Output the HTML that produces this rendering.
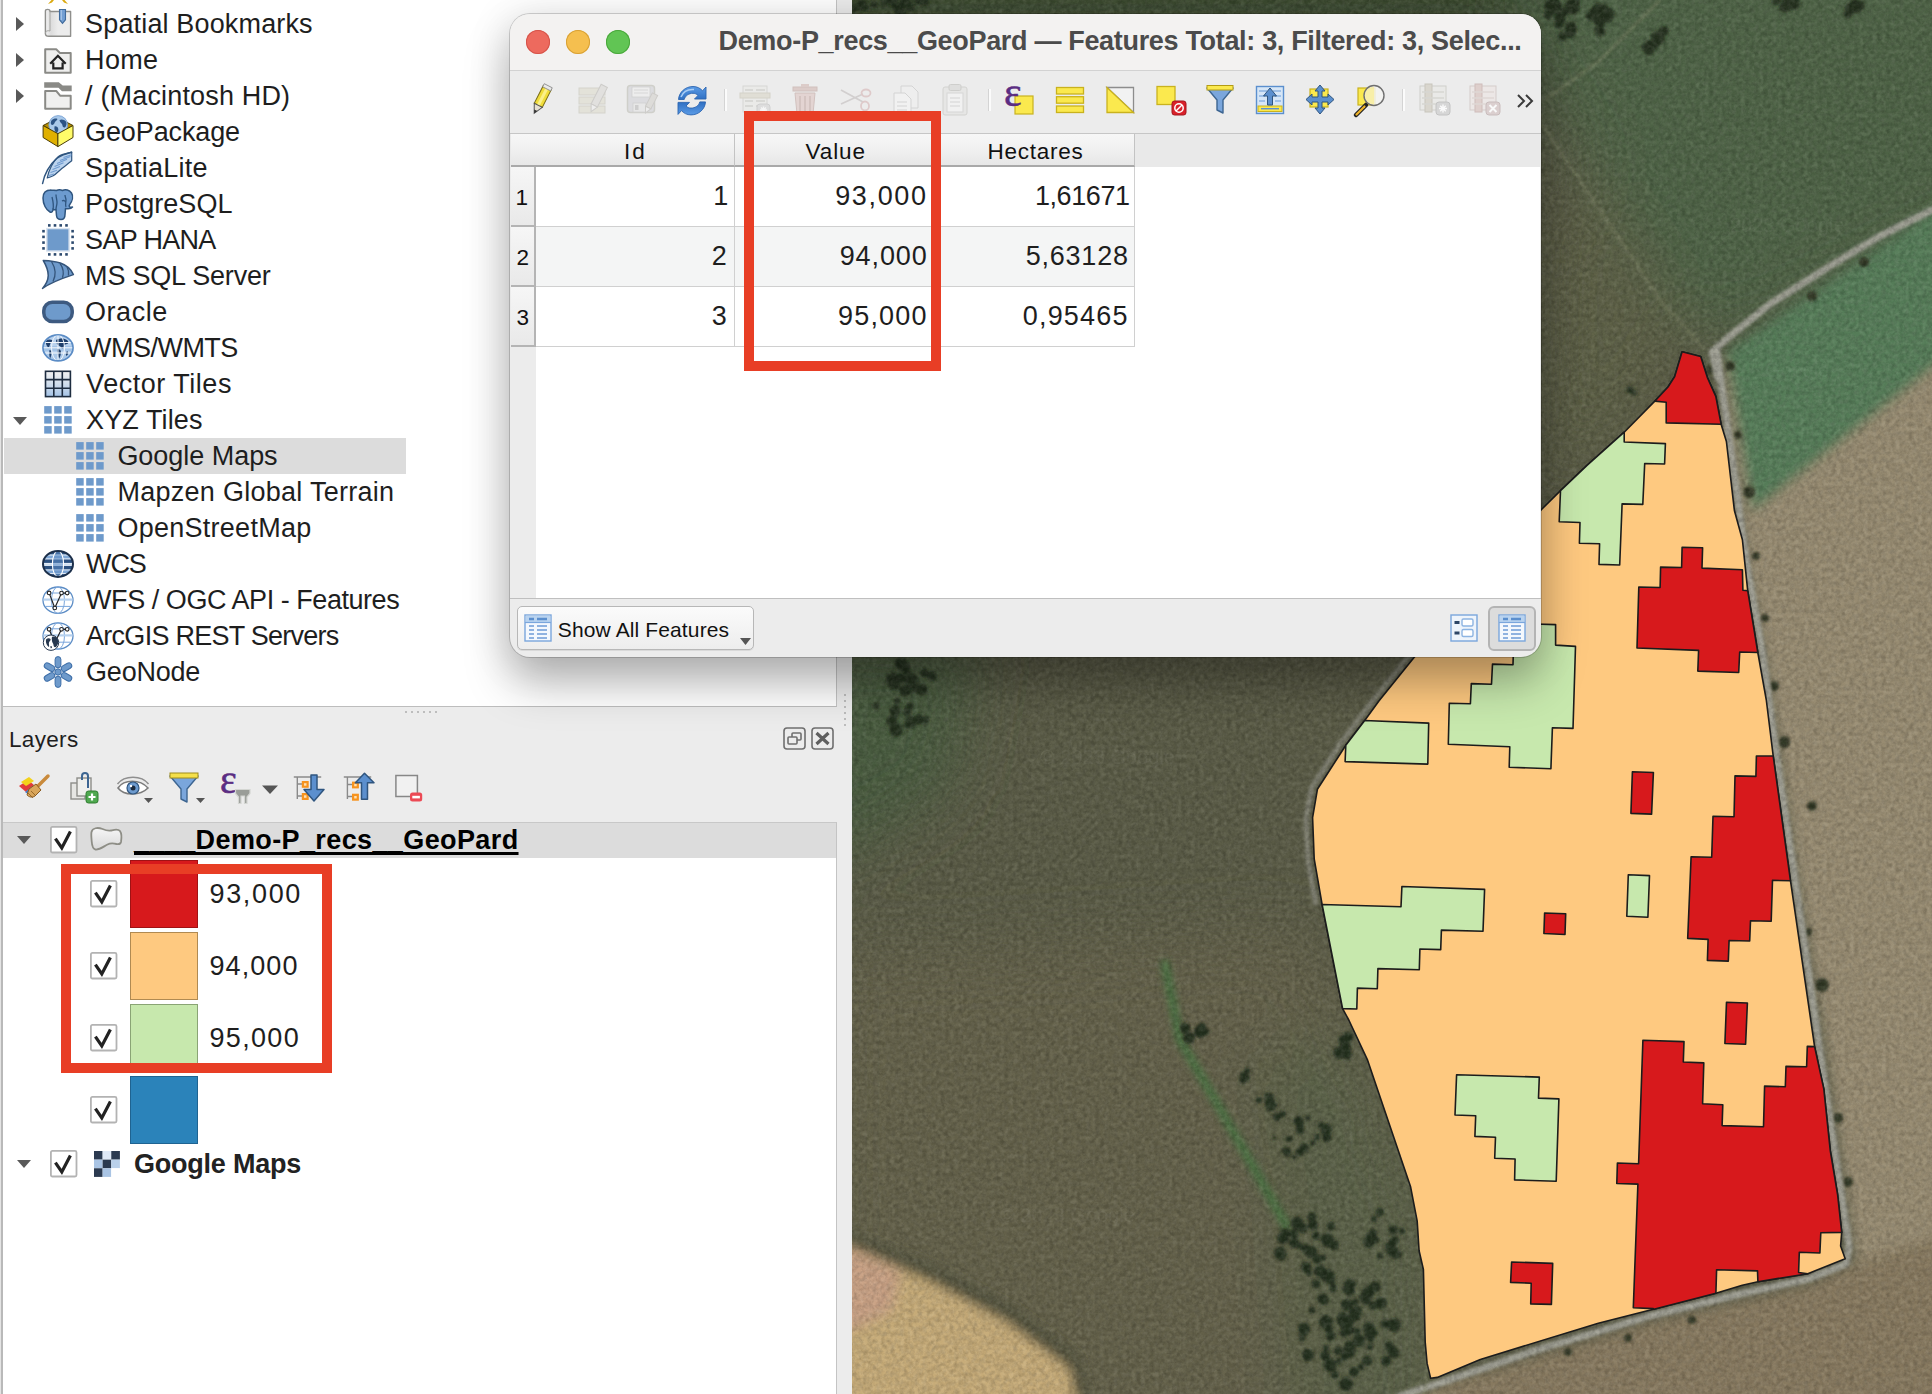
<!DOCTYPE html>
<html><head><meta charset="utf-8"><title>QGIS</title>
<style>
html,body{margin:0;padding:0}
body{width:1932px;height:1394px;overflow:hidden;position:relative;background:#ececec;font-family:"Liberation Sans",sans-serif;color:#1e1e1e}
.abs{position:absolute}
.t{white-space:pre}
svg{display:block;overflow:visible}
</style></head><body>
<svg id="map" width="1080" height="1394" viewBox="852 0 1080 1394" style="position:absolute;left:852px;top:0;overflow:hidden">
<defs>
<filter id="b6" filterUnits="userSpaceOnUse" x="700" y="-100" width="1400" height="1700"><feGaussianBlur stdDeviation="6"/></filter>
<filter id="b14" filterUnits="userSpaceOnUse" x="700" y="-100" width="1400" height="1700"><feGaussianBlur stdDeviation="14"/></filter>
<filter id="b2" filterUnits="userSpaceOnUse" x="700" y="-100" width="1400" height="1700"><feGaussianBlur stdDeviation="1.800"/></filter>
<filter id="b3" filterUnits="userSpaceOnUse" x="700" y="-100" width="1400" height="1700"><feGaussianBlur stdDeviation="3"/></filter>
<filter id="b30" filterUnits="userSpaceOnUse" x="700" y="-100" width="1400" height="1700"><feGaussianBlur stdDeviation="30"/></filter>
<filter id="noise" filterUnits="userSpaceOnUse" x="852" y="0" width="1080" height="1394"><feTurbulence type="fractalNoise" baseFrequency="0.22" numOctaves="3" seed="4" result="n"/><feColorMatrix in="n" type="matrix" values="0 0 0 0 0  0 0 0 0 0  0 0 0 0 0  1.4 1.4 0 0 -1.02"/></filter>
<filter id="noise2" filterUnits="userSpaceOnUse" x="852" y="0" width="1080" height="1394"><feTurbulence type="fractalNoise" baseFrequency="0.22" numOctaves="3" seed="11" result="n"/><feColorMatrix in="n" type="matrix" values="0 0 0 0 1  0 0 0 0 1  0 0 0 0 .9  1.4 1.4 0 0 -1.05"/></filter>
</defs>
<rect x="852" y="0" width="1080" height="1394" fill="#595a45"/>
<!-- large soft colour regions -->
<g filter="url(#b30)">
  <polygon points="1500,-80 2010,-80 2010,210 1740,345 1690,325 1590,170 1520,60" fill="#4d6244"/>
  <polygon points="1590,170 1690,325 1650,400 1545,500 1545,250" fill="#5b5e45"/>
  <polygon points="800,-80 1520,-80 1520,34 800,34" fill="#39482f"/>
  <polygon points="800,640 980,640 950,790 800,880" fill="#465a3c"/>
  <polygon points="820,960 1300,930 1400,1100 1440,1460 820,1460" fill="#64614a"/>
  <polygon points="1250,1060 1340,1030 1440,1220 1440,1460 1290,1460 1270,1200" fill="#5a6047"/>
</g>
<g filter="url(#b6)">
  <!-- right tan field -->
  <polygon points="1722,360 1990,175 1990,1460 1290,1460 1440,1385 1650,1322 1812,1284 1856,1262 1826,1050 1798,880 1764,650 1748,570 1726,410" fill="#978b71"/>
  <!-- green crop field top right -->
  <polygon points="1726,352 1990,172 1990,322 1752,512 1740,440" fill="#557c59"/>
  <!-- bottom brown -->
  <polygon points="1856,1262 1990,1222 1990,1460 1290,1460 1440,1385 1650,1322 1812,1284" fill="#87795f"/>
</g>
<g filter="url(#b6)">
  <!-- dark rim then yellow field bottom-left -->
  <polygon points="800,1225 856,1236 934,1268 1014,1310 1078,1358 1102,1460 800,1460" fill="#4a4b37"/>
  <polygon points="800,1240 852,1247 930,1281 1007,1322 1069,1368 1090,1460 800,1460" fill="#c6ab78"/>
  <polygon points="800,1247 852,1250 900,1272 892,1310 852,1330 800,1330" fill="#c9a184"/>
</g>
<!-- hedge strip -->
<g filter="url(#b3)">
  <polyline points="1165,964 1180,1040 1215,1100 1255,1170 1287,1227" fill="none" stroke="#4a6e40" stroke-width="9" stroke-linecap="round"/>
</g>
<g filter="url(#b2)" fill="#232e1c"><circle cx="895" cy="711" r="5.6"/><circle cx="918" cy="720" r="4.5"/><circle cx="919" cy="717" r="3.1"/><circle cx="897" cy="701" r="3.4"/><circle cx="876" cy="706" r="3.5"/><circle cx="896" cy="730" r="6.8"/><circle cx="894" cy="683" r="6.9"/><circle cx="925" cy="720" r="4.2"/><circle cx="907" cy="712" r="4.2"/><circle cx="916" cy="688" r="5.3"/><circle cx="901" cy="678" r="5.2"/><circle cx="910" cy="706" r="3.8"/><circle cx="907" cy="675" r="4.3"/><circle cx="894" cy="681" r="4.2"/><circle cx="924" cy="673" r="4.0"/><circle cx="892" cy="680" r="6.5"/><circle cx="911" cy="680" r="6.9"/><circle cx="911" cy="722" r="6.0"/><circle cx="907" cy="726" r="3.2"/><circle cx="905" cy="667" r="5.3"/><circle cx="922" cy="690" r="5.8"/><circle cx="894" cy="677" r="4.8"/><circle cx="932" cy="676" r="4.9"/><circle cx="905" cy="691" r="5.8"/><circle cx="901" cy="664" r="6.3"/><circle cx="892" cy="721" r="5.7"/><circle cx="1206" cy="1032" r="3.5"/><circle cx="1199" cy="1032" r="5.3"/><circle cx="1201" cy="1034" r="4.2"/><circle cx="1200" cy="1029" r="4.3"/><circle cx="1185" cy="1028" r="5.5"/><circle cx="1202" cy="1027" r="4.2"/><circle cx="1189" cy="1038" r="5.9"/><circle cx="1200" cy="1034" r="3.7"/><circle cx="1347" cy="1055" r="4.8"/><circle cx="1346" cy="1048" r="4.3"/><circle cx="1339" cy="1053" r="5.9"/><circle cx="1343" cy="1040" r="4.9"/><circle cx="1345" cy="1045" r="5.7"/><circle cx="1348" cy="1037" r="5.4"/><circle cx="1340" cy="1051" r="3.3"/><circle cx="1344" cy="1045" r="3.2"/><circle cx="1347" cy="1051" r="4.0"/><circle cx="1243" cy="1075" r="3.3"/><circle cx="1247" cy="1078" r="3.1"/><circle cx="1247" cy="1071" r="3.3"/><circle cx="1243" cy="1080" r="3.7"/><circle cx="1271" cy="1105" r="6.0"/><circle cx="1259" cy="1100" r="3.3"/><circle cx="1269" cy="1102" r="3.8"/><circle cx="1267" cy="1096" r="3.1"/><circle cx="1271" cy="1097" r="3.4"/><circle cx="1289" cy="1139" r="3.6"/><circle cx="1327" cy="1136" r="4.1"/><circle cx="1294" cy="1157" r="2.5"/><circle cx="1299" cy="1120" r="4.3"/><circle cx="1287" cy="1152" r="4.4"/><circle cx="1327" cy="1138" r="4.4"/><circle cx="1308" cy="1118" r="2.7"/><circle cx="1274" cy="1138" r="2.1"/><circle cx="1313" cy="1143" r="2.8"/><circle cx="1283" cy="1114" r="3.3"/><circle cx="1327" cy="1129" r="4.9"/><circle cx="1284" cy="1150" r="2.7"/><circle cx="1300" cy="1152" r="3.9"/><circle cx="1321" cy="1125" r="3.4"/><circle cx="1277" cy="1119" r="2.3"/><circle cx="1277" cy="1117" r="4.3"/><circle cx="1295" cy="1121" r="2.5"/><circle cx="1300" cy="1124" r="4.4"/><circle cx="1317" cy="1137" r="3.2"/><circle cx="1323" cy="1132" r="2.5"/><circle cx="1304" cy="1148" r="4.7"/><circle cx="1300" cy="1130" r="4.5"/><circle cx="1334" cy="1246" r="4.4"/><circle cx="1300" cy="1246" r="3.1"/><circle cx="1334" cy="1245" r="5.1"/><circle cx="1328" cy="1241" r="6.5"/><circle cx="1316" cy="1236" r="4.0"/><circle cx="1306" cy="1267" r="5.3"/><circle cx="1309" cy="1273" r="3.5"/><circle cx="1325" cy="1239" r="4.8"/><circle cx="1285" cy="1233" r="4.7"/><circle cx="1328" cy="1238" r="5.1"/><circle cx="1306" cy="1249" r="4.8"/><circle cx="1311" cy="1252" r="6.2"/><circle cx="1320" cy="1271" r="5.9"/><circle cx="1294" cy="1243" r="5.1"/><circle cx="1285" cy="1239" r="3.4"/><circle cx="1296" cy="1244" r="4.1"/><circle cx="1313" cy="1225" r="5.2"/><circle cx="1312" cy="1217" r="4.8"/><circle cx="1294" cy="1234" r="5.0"/><circle cx="1303" cy="1228" r="5.1"/><circle cx="1281" cy="1255" r="5.8"/><circle cx="1331" cy="1226" r="4.0"/><circle cx="1283" cy="1238" r="6.4"/><circle cx="1317" cy="1259" r="4.8"/><circle cx="1323" cy="1258" r="3.3"/><circle cx="1297" cy="1223" r="6.6"/><circle cx="1324" cy="1274" r="5.6"/><circle cx="1328" cy="1276" r="6.9"/><circle cx="1316" cy="1284" r="4.6"/><circle cx="1280" cy="1253" r="6.3"/><circle cx="1367" cy="1361" r="5.1"/><circle cx="1338" cy="1351" r="4.3"/><circle cx="1349" cy="1322" r="5.2"/><circle cx="1344" cy="1333" r="4.3"/><circle cx="1325" cy="1302" r="3.3"/><circle cx="1394" cy="1325" r="6.9"/><circle cx="1370" cy="1347" r="3.2"/><circle cx="1355" cy="1302" r="3.5"/><circle cx="1308" cy="1355" r="6.3"/><circle cx="1349" cy="1351" r="6.7"/><circle cx="1312" cy="1310" r="3.4"/><circle cx="1389" cy="1346" r="4.7"/><circle cx="1394" cy="1353" r="5.5"/><circle cx="1355" cy="1315" r="6.4"/><circle cx="1392" cy="1351" r="4.8"/><circle cx="1330" cy="1365" r="6.7"/><circle cx="1348" cy="1350" r="5.1"/><circle cx="1351" cy="1348" r="3.6"/><circle cx="1371" cy="1338" r="4.2"/><circle cx="1335" cy="1375" r="4.2"/><circle cx="1329" cy="1330" r="4.4"/><circle cx="1375" cy="1333" r="3.1"/><circle cx="1346" cy="1289" r="3.8"/><circle cx="1302" cy="1338" r="3.4"/><circle cx="1364" cy="1297" r="5.0"/><circle cx="1366" cy="1300" r="5.0"/><circle cx="1331" cy="1280" r="4.4"/><circle cx="1371" cy="1290" r="5.5"/><circle cx="1326" cy="1348" r="3.2"/><circle cx="1359" cy="1341" r="6.0"/><circle cx="1349" cy="1352" r="3.3"/><circle cx="1375" cy="1287" r="5.7"/><circle cx="1345" cy="1357" r="4.2"/><circle cx="1331" cy="1336" r="4.8"/><circle cx="1346" cy="1384" r="6.9"/><circle cx="1326" cy="1322" r="6.9"/><circle cx="1339" cy="1361" r="3.0"/><circle cx="1325" cy="1356" r="5.0"/><circle cx="1361" cy="1367" r="3.0"/><circle cx="1349" cy="1346" r="4.6"/><circle cx="1357" cy="1332" r="4.2"/><circle cx="1354" cy="1372" r="5.1"/><circle cx="1350" cy="1285" r="5.9"/><circle cx="1373" cy="1306" r="4.3"/><circle cx="1369" cy="1328" r="5.9"/><circle cx="1343" cy="1321" r="6.3"/><circle cx="1381" cy="1303" r="5.9"/><circle cx="1357" cy="1311" r="5.1"/><circle cx="1304" cy="1329" r="6.2"/><circle cx="1368" cy="1293" r="6.6"/><circle cx="1333" cy="1288" r="3.9"/><circle cx="1368" cy="1334" r="4.4"/><circle cx="1386" cy="1361" r="5.2"/><circle cx="1323" cy="1299" r="5.7"/><circle cx="1347" cy="1330" r="6.2"/><circle cx="1350" cy="1291" r="5.1"/><circle cx="1343" cy="1318" r="5.9"/><circle cx="1350" cy="1345" r="4.1"/><circle cx="1347" cy="1305" r="6.0"/><circle cx="1385" cy="1324" r="4.5"/><circle cx="1370" cy="1238" r="5.3"/><circle cx="1374" cy="1219" r="3.2"/><circle cx="1390" cy="1247" r="5.2"/><circle cx="1380" cy="1256" r="3.0"/><circle cx="1394" cy="1241" r="5.0"/><circle cx="1380" cy="1212" r="3.9"/><circle cx="1373" cy="1233" r="4.4"/><circle cx="1398" cy="1254" r="3.6"/><circle cx="1402" cy="1231" r="3.1"/><circle cx="1369" cy="1242" r="5.9"/><circle cx="1376" cy="1240" r="3.6"/><circle cx="1393" cy="1230" r="4.7"/><circle cx="1393" cy="1252" r="5.9"/><circle cx="1396" cy="1255" r="4.5"/><circle cx="1597" cy="9" r="5.2"/><circle cx="1594" cy="12" r="4.1"/><circle cx="1599" cy="20" r="6.3"/><circle cx="1571" cy="27" r="5.7"/><circle cx="1562" cy="37" r="4.0"/><circle cx="1575" cy="2" r="4.6"/><circle cx="1601" cy="12" r="8.5"/><circle cx="1570" cy="32" r="6.0"/><circle cx="1601" cy="20" r="5.8"/><circle cx="1559" cy="25" r="4.2"/><circle cx="1600" cy="31" r="5.4"/><circle cx="1591" cy="16" r="5.3"/><circle cx="1560" cy="19" r="5.9"/><circle cx="1606" cy="15" r="8.1"/><circle cx="1553" cy="6" r="8.7"/><circle cx="1548" cy="15" r="4.2"/><circle cx="1572" cy="7" r="7.8"/><circle cx="1564" cy="12" r="4.2"/><circle cx="1656" cy="37" r="4.9"/><circle cx="1648" cy="47" r="6.0"/><circle cx="1659" cy="39" r="5.6"/><circle cx="1649" cy="51" r="4.6"/><circle cx="1655" cy="46" r="3.8"/><circle cx="1660" cy="34" r="3.9"/><circle cx="1664" cy="31" r="4.8"/><circle cx="1656" cy="45" r="3.4"/><circle cx="1650" cy="44" r="4.0"/><circle cx="1785" cy="7" r="5.7"/><circle cx="1786" cy="-2" r="4.2"/><circle cx="1776" cy="1" r="4.0"/><circle cx="1794" cy="3" r="5.9"/><circle cx="1794" cy="5" r="4.9"/><circle cx="1852" cy="5" r="3.8"/><circle cx="1848" cy="14" r="4.3"/><circle cx="1859" cy="6" r="5.6"/><circle cx="1850" cy="8" r="5.1"/><circle cx="1855" cy="4" r="4.8"/><circle cx="1856" cy="8" r="5.8"/><circle cx="920" cy="-1" r="5.9"/><circle cx="900" cy="9" r="3.5"/><circle cx="861" cy="5" r="5.8"/><circle cx="893" cy="-0" r="5.3"/><circle cx="866" cy="8" r="3.1"/><circle cx="905" cy="2" r="5.8"/><circle cx="884" cy="3" r="3.4"/><circle cx="900" cy="12" r="5.1"/><circle cx="910" cy="7" r="4.6"/><circle cx="874" cy="4" r="3.7"/><circle cx="896" cy="6" r="3.9"/><circle cx="854" cy="8" r="4.9"/><circle cx="925" cy="2" r="3.7"/><circle cx="901" cy="14" r="5.1"/><circle cx="897" cy="7" r="4.5"/><circle cx="886" cy="1" r="3.8"/><circle cx="1629" cy="388" r="2.5"/><circle cx="1634" cy="393" r="2.8"/><circle cx="1630" cy="390" r="3.6"/></g>
<g filter="url(#b2)" fill="#2f3524">
  <circle cx="1710" cy="370" r="4"/><circle cx="1730" cy="366" r="5"/><circle cx="1738" cy="435" r="4"/><circle cx="1749" cy="492" r="6"/><circle cx="1756" cy="556" r="4"/>
  <circle cx="1765" cy="618" r="4"/><circle cx="1774" cy="686" r="5"/><circle cx="1784" cy="742" r="6"/><circle cx="1812" cy="806" r="5"/><circle cx="1808" cy="932" r="4"/>
  <circle cx="1822" cy="985" r="7"/><circle cx="1838" cy="1118" r="5"/><circle cx="1848" cy="1182" r="5"/>
  <circle cx="1864" cy="262" r="5"/><circle cx="1812" cy="296" r="5"/>
  <circle cx="1692" cy="1320" r="4"/><circle cx="1628" cy="1338" r="4"/><circle cx="1568" cy="1352" r="4"/>
</g>
<!-- road -->
<g fill="none" stroke="#a3a398" stroke-width="7" stroke-linejoin="round" stroke-linecap="round" filter="url(#b2)" opacity=".95">
  <polyline points="1940,206 1880,236 1830,266 1770,304 1730,336 1712,352 1718,378"/>
  <polyline points="1717,352 1725,410 1735,480 1746,560 1762,650 1777,760 1795,880 1819,1046 1836,1160 1849,1246 1846,1264 1808,1279 1740,1294 1650,1316 1540,1349 1440,1383 1400,1396"/>
</g>
<g fill="none" stroke="#8a8a7e" stroke-width="5" opacity=".8" filter="url(#b2)"><polyline points="1436,622 1408,657 1374,699 1340,744 1312,787 1306,818 1308,860 1316,905"/></g>
<!-- faint tracks -->
<g fill="none" stroke="#85896a" stroke-width="3" opacity=".45" filter="url(#b2)">
  <polyline points="1542,125 1600,210 1660,300 1705,350"/>
  <polyline points="1660,0 1600,60 1545,100"/>
  <polyline points="1425,1394 1428,1330 1422,1300"/>
</g>
<g font-family="Liberation Sans, sans-serif" font-size="20" fill="#ffffff" opacity=".045">
  <text x="1040" y="764">© 2023 Google</text><text x="1000" y="1222">© 2023 Google</text><text x="1730" y="232">2023 Google</text><text x="1765" y="377">Google</text>
</g>
<rect x="852" y="0" width="1080" height="1394" filter="url(#noise)" opacity=".16"/><rect x="852" y="0" width="1080" height="1394" filter="url(#noise2)" opacity=".09"/>
<polygon points="1682.1,351.8 1700.7,356.5 1707.3,377.3 1715.8,396.4 1721.1,424.2 1726.4,441.5 1734.4,510.5 1742.4,539.7 1747.7,590.7 1757.8,652.5 1766.3,700.0 1773.2,756.0 1790.5,880.8 1814.6,1046.6 1823.8,1088.9 1830.3,1150.9 1837.6,1194.5 1841.7,1232.4 1840.6,1246.1 1845.2,1258.8 1807.8,1273.7 1757.9,1281.7 1742.3,1285.2 1715.9,1293.2 1653.3,1309.2 1598.3,1323.2 1480.3,1359.4 1437.3,1377.4 1430.6,1378.2 1427.1,1363.4 1425.2,1342.0 1423.4,1269.5 1419.1,1250.7 1417.2,1221.2 1410.5,1186.4 1367.6,1060.2 1348.8,1020.0 1342.6,1008.6 1322.1,904.5 1314.2,858.8 1312.6,817.7 1317.4,789.3 1345.8,745.2 1364.7,720.5 1378.9,701.0 1412.0,660.0 1470.0,590.0 1542.0,509.0 1560.5,490.6 1587.0,465.4 1624.2,432.2 1654.8,401.1 1668.0,387.0 1674.7,376.5" fill="#fec980" stroke="#1c1c1c" stroke-width="1.6" stroke-linejoin="round"/>
<polygon points="1624.2,432.2 1624.2,442.0 1665.4,443.6 1664.6,464.0 1644.7,463.5 1642.8,504.4 1622.1,503.9 1619.7,565.0 1599.0,564.4 1599.6,543.7 1579.4,543.2 1580.0,522.5 1559.2,521.7 1560.5,490.6 1587.0,465.4" fill="#c7e8ad" stroke="#1c1c1c" stroke-width="1.6" stroke-linejoin="round"/>
<polygon points="1364.7,720.5 1428.7,723.1 1427.8,764.1 1345.1,761.6 1345.8,745.2" fill="#c7e8ad" stroke="#1c1c1c" stroke-width="1.6" stroke-linejoin="round"/>
<polygon points="1534.5,624.0 1555.6,624.6 1555.6,645.1 1575.5,646.4 1573.0,728.4 1552.4,727.8 1550.9,768.8 1509.2,767.2 1509.8,746.7 1448.3,744.2 1449.3,703.2 1470.4,703.8 1471.3,683.6 1491.5,684.3 1492.5,664.1 1513.0,664.7 1513.6,644.0 1534.0,644.5" fill="#c7e8ad" stroke="#1c1c1c" stroke-width="1.6" stroke-linejoin="round"/>
<polygon points="1322.1,904.5 1401.0,906.7 1401.9,886.5 1484.6,889.4 1483.0,931.3 1441.4,930.1 1440.7,949.6 1419.9,949.0 1419.3,969.8 1377.9,968.6 1377.3,988.8 1357.4,988.1 1356.8,1009.0 1342.6,1008.6" fill="#c7e8ad" stroke="#1c1c1c" stroke-width="1.6" stroke-linejoin="round"/>
<polygon points="1628.3,874.8 1649.5,875.6 1647.9,917.2 1626.8,916.2" fill="#c7e8ad" stroke="#1c1c1c" stroke-width="1.6" stroke-linejoin="round"/>
<polygon points="1456.6,1074.7 1539.3,1077.1 1538.5,1098.1 1558.9,1098.9 1556.2,1181.2 1514.6,1179.9 1515.1,1159.0 1494.7,1158.2 1495.5,1137.2 1474.9,1136.4 1475.7,1115.8 1455.0,1115.0" fill="#c7e8ad" stroke="#1c1c1c" stroke-width="1.6" stroke-linejoin="round"/>
<polygon points="1682.1,351.8 1700.7,356.5 1707.3,377.3 1715.8,396.4 1721.1,424.2 1666.2,422.9 1666.2,402.2 1654.8,401.1 1668.0,387.0 1674.7,376.5" fill="#d7191c" stroke="#1c1c1c" stroke-width="1.6" stroke-linejoin="round"/>
<polygon points="1682.1,547.2 1702.6,547.7 1702.0,568.1 1742.4,569.7 1742.9,590.2 1747.7,590.7 1757.8,652.5 1739.7,652.0 1738.7,672.5 1697.8,671.1 1698.6,650.4 1637.0,648.0 1638.8,587.0 1660.1,587.5 1660.6,567.1 1681.6,567.5" fill="#d7191c" stroke="#1c1c1c" stroke-width="1.6" stroke-linejoin="round"/>
<polygon points="1632.4,771.8 1653.4,772.5 1651.6,814.1 1630.9,813.4" fill="#d7191c" stroke="#1c1c1c" stroke-width="1.6" stroke-linejoin="round"/>
<polygon points="1756.4,756.0 1773.2,756.0 1790.5,880.8 1772.5,880.3 1771.2,921.3 1750.5,920.8 1749.7,941.0 1729.1,940.5 1728.3,961.1 1707.4,960.4 1708.1,939.4 1687.7,938.4 1691.1,856.8 1711.7,857.3 1713.0,816.2 1734.0,816.7 1735.0,775.9 1755.9,776.4" fill="#d7191c" stroke="#1c1c1c" stroke-width="1.6" stroke-linejoin="round"/>
<polygon points="1544.6,913.0 1565.7,913.7 1565.0,934.5 1543.9,933.5" fill="#d7191c" stroke="#1c1c1c" stroke-width="1.6" stroke-linejoin="round"/>
<polygon points="1726.5,1002.2 1747.4,1003.0 1745.6,1044.3 1724.9,1043.5" fill="#d7191c" stroke="#1c1c1c" stroke-width="1.6" stroke-linejoin="round"/>
<polygon points="1642.9,1040.2 1684.0,1041.6 1683.3,1062.0 1703.8,1062.9 1702.6,1103.8 1722.8,1104.7 1722.1,1125.6 1763.5,1126.8 1764.6,1086.1 1785.3,1086.8 1786.0,1066.4 1806.6,1066.8 1807.3,1046.4 1814.6,1046.6 1823.8,1088.9 1830.3,1150.9 1837.6,1194.5 1841.7,1232.4 1820.8,1232.8 1819.9,1253.0 1799.3,1252.3 1798.6,1272.5 1807.8,1273.7 1757.9,1281.7 1757.5,1270.9 1716.6,1269.8 1715.9,1293.2 1653.9,1309.2 1653.3,1308.6 1633.3,1307.7 1637.9,1184.1 1616.8,1183.5 1617.4,1163.0 1638.6,1163.7" fill="#d7191c" stroke="#1c1c1c" stroke-width="1.6" stroke-linejoin="round"/>
<polygon points="1511.6,1262.0 1552.7,1263.4 1551.4,1304.4 1530.7,1303.9 1531.2,1283.2 1510.6,1282.4" fill="#d7191c" stroke="#1c1c1c" stroke-width="1.6" stroke-linejoin="round"/>
</svg>
<div class="abs" style="left:0;top:0;width:1px;height:1394px;background:#e4e4e4"></div>
<div class="abs" style="left:1px;top:0;width:2px;height:1394px;background:#b9b9b9"></div>
<div class="abs" style="left:3px;top:0;width:833px;height:706px;background:#fff;border-right:1px solid #c4c4c4;border-bottom:1px solid #bdbdbd"></div>
<svg class="abs" style="left:47px;top:0" width="22" height="5" viewBox="0 0 22 5"><path d="M1 4l3.500-4h2.500l-2 2.500zM21 4l-3.500-4h-2.500l2 2.500z" fill="#dba90f"/></svg>
<div class="abs" style="left:4px;top:438px;width:402px;height:36px;background:#dcdcdc"></div>
<svg class="abs" style="left:15px;top:16px" width="10" height="16" viewBox="0 0 10 16"><path d="M1 1l8 7l-8 7z" fill="#595959"/></svg>
<svg class="abs" style="left:42px;top:8.0px" width="32" height="32" viewBox="0 0 32 32" ><defs><linearGradient id="bkg" x1="0" y1="0" x2="1" y2="0"><stop offset="0" stop-color="#f4f4f4"/><stop offset=".22" stop-color="#dcdcdc"/><stop offset=".5" stop-color="#ececec"/><stop offset="1" stop-color="#ececec"/></linearGradient></defs><path d="M8 3.500V3c0-2.200-4.600-2.200-4.600 0v22.500c0 2 1.400 2.800 3.400 2.800h21.800V3.500z" fill="url(#bkg)" stroke="#8f8f8c" stroke-width="1.400" stroke-linejoin="round"/><path d="M8 3.500v19.500c-2.500-.800-4.600 0-4.600 2.500" fill="none" stroke="#a4a4a1" stroke-width="1"/><path d="M17.500 1.500h6v10.200l-3 3.600l-3-3.600z" fill="#739fd3" stroke="#3f6a9c" stroke-width="1.100"/><path d="M19.300 2v10" stroke="#a9c6e8" stroke-width="1.200"/></svg>
<span class="abs t" style="left:85.1px;top:6.0px;height:36px;line-height:36px;font-size:27px;font-weight:400;color:#1e1e1e;letter-spacing:0.152px;">Spatial Bookmarks</span>
<svg class="abs" style="left:15px;top:52px" width="10" height="16" viewBox="0 0 10 16"><path d="M1 1l8 7l-8 7z" fill="#595959"/></svg>
<svg class="abs" style="left:42px;top:44.0px" width="32" height="32" viewBox="0 0 32 32" ><path d="M3.200 5.200h11l3.900 3.900h10.600v19.700h-25.500z" fill="#efefee" stroke="#8a8a86" stroke-width="2" stroke-linejoin="round"/><path d="M8.200 19.800l7.700-8l7.800 8M11.300 18.500v5.900h9.300v-5.900" fill="none" stroke="#222" stroke-width="2.200" stroke-linejoin="miter"/></svg>
<span class="abs t" style="left:85.1px;top:42.0px;height:36px;line-height:36px;font-size:27px;font-weight:400;color:#1e1e1e;letter-spacing:0.317px;">Home</span>
<svg class="abs" style="left:15px;top:88px" width="10" height="16" viewBox="0 0 10 16"><path d="M1 1l8 7l-8 7z" fill="#595959"/></svg>
<svg class="abs" style="left:42px;top:80.0px" width="32" height="32" viewBox="0 0 32 32" ><path d="M2.200 2.200h14.600l3.900 3.400h9v5.600h-9.700l-3.500-3.400h-14.300z" fill="#8a8a86"/><path d="M3.200 10.900h11l3.900 4.800h10.600v13h-25.500z" fill="#f0f0ef" stroke="#8a8a86" stroke-width="2" stroke-linejoin="round"/></svg>
<span class="abs t" style="left:85.1px;top:78.0px;height:36px;line-height:36px;font-size:27px;font-weight:400;color:#1e1e1e;letter-spacing:0.160px;">/ (Macintosh HD)</span>
<svg class="abs" style="left:42px;top:116.0px" width="32" height="32" viewBox="0 0 32 32" ><path d="M1.100 9.500L16 1.800L31 9.500L15.900 17.700z" fill="#b98f00" stroke="#4a3c05" stroke-width="1" stroke-linejoin="round"/><circle cx="16.200" cy="9" r="9.400" fill="#a9c9ea" stroke="#6f9bd0" stroke-width=".800"/><path d="M9.500 4.500c2-2 4.500-2.300 6-1.500c-.500 1.800-2.500 2-3 4c-.400 1.500-2 2.500-3.300 1.500c-.700-1.300-.500-2.800.300-4zM17.500 4c2-1.200 5-.500 6.500 1.500c1 2.200.500 4.500-1 6c-1.800.500-2.500-1-2.600-2.500c-.100-1.500-2.500-2-2.900-5zM12.500 10.500c1.800-.500 3.500.500 3.800 2.500c.200 1.600-.600 3-1.600 4c-1.500-1-2.800-3.500-2.200-6.500z" fill="#2b5384"/><path d="M1.100 9.500l14.800 8.200v12.900l-14.800-9.100z" fill="#e0b000" stroke="#4a3c05" stroke-width="1" stroke-linejoin="round"/><path d="M15.900 17.700l15.100-8.200v12l-15.100 9.100z" fill="#fffb69" stroke="#4a3c05" stroke-width="1" stroke-linejoin="round"/></svg>
<span class="abs t" style="left:85.1px;top:114.0px;height:36px;line-height:36px;font-size:27px;font-weight:400;color:#1e1e1e;letter-spacing:-0.121px;">GeoPackage</span>
<svg class="abs" style="left:42px;top:152.0px" width="32" height="32" viewBox="0 0 32 32" ><path d="M5.200 26c1.500-8 6-17 11.200-21.500c4-2.500 9-3.300 13.300-4.300v8.600c-3 2.500-6.500 5-9.900 7.700c-3 2.500-5.500 5.500-8.600 7.300c-2 1-4 1.700-6 2.200z" fill="#bcd4ee" stroke="#2f557f" stroke-width="1.200" stroke-linejoin="round"/><path d="M.600 31.500c1.500-9 7-19 14-25c4-3 9-5 15-6.300" fill="none" stroke="#2f557f" stroke-width="1.500" stroke-linecap="round"/><path d="M7 23.500l5-1.500M8.500 20.500l6.500-2.300M10.500 17.500l7.500-3M12.500 14.500l9-3.800M15 11.500l10-4.300M18 8.500l10.500-4M21.500 5.500l8-2.800" fill="none" stroke="#6f9bd0" stroke-width="1.100"/></svg>
<span class="abs t" style="left:85.1px;top:150.0px;height:36px;line-height:36px;font-size:27px;font-weight:400;color:#1e1e1e;letter-spacing:0.271px;">SpatiaLite</span>
<svg class="abs" style="left:42px;top:188.0px" width="32" height="32" viewBox="0 0 32 32" ><path d="M9 2c-5 0-8 3-8 8c0 6 3 12 7 14c2 1 3-1 3-3c1 1 2 1 3 .500l.500 6c.300 3 2 4 4.500 4c3 0 4-2 4-5l.500-6c3 .500 6 0 7-1.500c-3 .500-4-.500-3-2c3-4 4-9 2-12c-2-3-6-4-9-2.500c-2-1-4-1-6 0c-1.500-.500-3-.500-6-.500z" fill="#6d9bcf" stroke="#2f557f" stroke-width="1.500" stroke-linejoin="round"/><path d="M11 21c1-4 0-8-1-12M14 21.500c0-3 1-4 1-7c0-3-1-5-1-8M24 19c-1-2 0-5 0-7c0-2-1-3-1-5M20 13c1.500-1 3-.500 3.500 1" fill="none" stroke="#2f557f" stroke-width="1.300"/></svg>
<span class="abs t" style="left:85.1px;top:186.0px;height:36px;line-height:36px;font-size:27px;font-weight:400;color:#1e1e1e;letter-spacing:0.032px;">PostgreSQL</span>
<svg class="abs" style="left:42px;top:224.0px" width="32" height="32" viewBox="0 0 32 32" ><rect x="4.800" y="4.600" width="22.300" height="22.400" fill="#6e9acb" stroke="#d8e2ee" stroke-width="1.400"/><g fill="#2d4a6e"><rect x="6.0" y="0.100" width="2.600" height="2.600"/><rect x="6.0" y="29.100" width="2.600" height="2.600"/><rect x="0.200" y="5.9" width="2.600" height="2.600"/><rect x="29.300" y="5.9" width="2.600" height="2.600"/><rect x="11.7" y="0.100" width="2.600" height="2.600"/><rect x="11.7" y="29.100" width="2.600" height="2.600"/><rect x="0.200" y="11.6" width="2.600" height="2.600"/><rect x="29.300" y="11.6" width="2.600" height="2.600"/><rect x="17.4" y="0.100" width="2.600" height="2.600"/><rect x="17.4" y="29.100" width="2.600" height="2.600"/><rect x="0.200" y="17.299999999999997" width="2.600" height="2.600"/><rect x="29.300" y="17.299999999999997" width="2.600" height="2.600"/><rect x="23.2" y="0.100" width="2.600" height="2.600"/><rect x="23.2" y="29.100" width="2.600" height="2.600"/><rect x="0.200" y="23.099999999999998" width="2.600" height="2.600"/><rect x="29.300" y="23.099999999999998" width="2.600" height="2.600"/></g></svg>
<span class="abs t" style="left:85.1px;top:222.0px;height:36px;line-height:36px;font-size:27px;font-weight:400;color:#1e1e1e;letter-spacing:-0.683px;">SAP HANA</span>
<svg class="abs" style="left:42px;top:260.0px" width="32" height="32" viewBox="0 0 32 32" ><path d="M1.300 .500C12 1 26 2 31.400 14.600C18 19 8 23 .500 28.400C8 20 8 12 1.300 .500z" fill="#6e9acb" stroke="#34547a" stroke-width="1.500" stroke-linejoin="round"/><path d="M9.500 1.500c4 6.500 4.500 14 1.500 20M18 3.300c3.500 5 4 10 2.500 14.500M25 7c1.500 2.500 2 5.500 1.500 8.500" fill="none" stroke="#34547a" stroke-width="1.300"/></svg>
<span class="abs t" style="left:85.1px;top:258.0px;height:36px;line-height:36px;font-size:27px;font-weight:400;color:#1e1e1e;letter-spacing:-0.197px;">MS SQL Server</span>
<svg class="abs" style="left:42px;top:296.0px" width="32" height="32" viewBox="0 0 32 32" ><rect x="1.800" y="6.200" width="28.400" height="19.400" rx="8.500" fill="#6e9acb" stroke="#3d5a80" stroke-width="3.500"/></svg>
<span class="abs t" style="left:85.1px;top:294.0px;height:36px;line-height:36px;font-size:27px;font-weight:400;color:#1e1e1e;letter-spacing:0.511px;">Oracle</span>
<svg class="abs" style="left:42px;top:332.0px" width="32" height="32" viewBox="0 0 32 32" ><ellipse cx="16" cy="15.800" rx="15" ry="13" fill="#b7d1ee" stroke="#5b8cc5" stroke-width="1.800"/><clipPath id="wmc"><ellipse cx="16" cy="15.800" rx="14.200" ry="12.200"/></clipPath><g clip-path="url(#wmc)"><rect x="0" y="14" width="32" height="5" fill="#a3c3e6"/><rect x="0" y="22" width="32" height="8" fill="#a9c7e8"/><path d="M4 8.500c2-1.500 5-1.500 7 0c-1 1.500-2.500 2-3 4c-.500 2-1 3-2.200 2.500c-1.500-1.500-2.500-4.500-1.800-6.500zM7.500 18c1 0 2 .800 2 2.500c0 2-.500 4.500-1.500 6c-.700-2-1-6-.500-8.500zM14 8c3-1.500 7-2 10-.500c2 .800 3 2.500 2 4c-1 1-3 .500-4 2c-.800 1.500 0 3-1.500 3c-1.500 0-1.500-2-3-2.500c-2-.500-3.500-3-3.500-6zM15.500 17c2 0 3.500 1 3.500 3c0 2.500-1 5-1.800 6.500c-1-1.500-1.200-3-1.500-5c-.200-1.500-.700-3-.200-4.500zM25 19c1 .500 1.500 1.500 1 3c-.500 1.500-1.500 2-2 1.500c-.300-1.500 0-3.500 1-4.500z" fill="#1f3f6b"/><ellipse cx="16" cy="15.800" rx="6.500" ry="13" fill="none" stroke="#f2f7fc" stroke-width="1"/><path d="M0 10.500h32M0 15.800h32M0 21h32M16 2v28" stroke="#f2f7fc" stroke-width="1" fill="none"/></g></svg>
<span class="abs t" style="left:86.1px;top:330.0px;height:36px;line-height:36px;font-size:27px;font-weight:400;color:#1e1e1e;letter-spacing:-0.534px;">WMS/WMTS</span>
<svg class="abs" style="left:42px;top:368.0px" width="32" height="32" viewBox="0 0 32 32" ><defs><linearGradient id="vtg" x1="0" y1="0" x2="0" y2="1"><stop offset="0" stop-color="#f2f2f2"/><stop offset=".5" stop-color="#d0ddec"/><stop offset="1" stop-color="#a4c3e6"/></linearGradient></defs><rect x="3.500" y="3.300" width="24.900" height="25.300" fill="url(#vtg)" stroke="#1e2d40" stroke-width="1.600"/><path d="M11.800 3.300v25.300M20.300 3.300v25.300M3.500 11.600h24.900M3.500 20.300h24.900" stroke="#1e2d40" stroke-width="1.600" fill="none"/></svg>
<span class="abs t" style="left:86.1px;top:366.0px;height:36px;line-height:36px;font-size:27px;font-weight:400;color:#1e1e1e;letter-spacing:0.520px;">Vector Tiles</span>
<svg class="abs" style="left:12px;top:416px" width="16" height="10" viewBox="0 0 16 10"><path d="M1 1h14l-7 8z" fill="#595959"/></svg>
<svg class="abs" style="left:42px;top:404.0px" width="32" height="32" viewBox="0 0 32 32" ><rect x="2.2" y="2.1" width="7.500" height="7.500" fill="#6e9acb"/><rect x="12.2" y="2.1" width="7.500" height="7.500" fill="#6e9acb"/><rect x="22.2" y="2.1" width="7.500" height="7.500" fill="#6e9acb"/><rect x="2.2" y="12.1" width="7.500" height="7.500" fill="#6e9acb"/><rect x="12.2" y="12.1" width="7.500" height="7.500" fill="#6e9acb"/><rect x="22.2" y="12.1" width="7.500" height="7.500" fill="#6e9acb"/><rect x="2.2" y="22.1" width="7.500" height="7.500" fill="#6e9acb"/><rect x="12.2" y="22.1" width="7.500" height="7.500" fill="#6e9acb"/><rect x="22.2" y="22.1" width="7.500" height="7.500" fill="#6e9acb"/></svg>
<span class="abs t" style="left:86.1px;top:402.0px;height:36px;line-height:36px;font-size:27px;font-weight:400;color:#1e1e1e;letter-spacing:0.097px;">XYZ Tiles</span>
<svg class="abs" style="left:74px;top:440.0px" width="32" height="32" viewBox="0 0 32 32" ><rect x="2.2" y="2.1" width="7.500" height="7.500" fill="#6e9acb"/><rect x="12.2" y="2.1" width="7.500" height="7.500" fill="#6e9acb"/><rect x="22.2" y="2.1" width="7.500" height="7.500" fill="#6e9acb"/><rect x="2.2" y="12.1" width="7.500" height="7.500" fill="#6e9acb"/><rect x="12.2" y="12.1" width="7.500" height="7.500" fill="#6e9acb"/><rect x="22.2" y="12.1" width="7.500" height="7.500" fill="#6e9acb"/><rect x="2.2" y="22.1" width="7.500" height="7.500" fill="#6e9acb"/><rect x="12.2" y="22.1" width="7.500" height="7.500" fill="#6e9acb"/><rect x="22.2" y="22.1" width="7.500" height="7.500" fill="#6e9acb"/></svg>
<span class="abs t" style="left:117.4px;top:438.0px;height:36px;line-height:36px;font-size:27px;font-weight:400;color:#1e1e1e;letter-spacing:-0.036px;">Google Maps</span>
<svg class="abs" style="left:74px;top:476.0px" width="32" height="32" viewBox="0 0 32 32" ><rect x="2.2" y="2.1" width="7.500" height="7.500" fill="#6e9acb"/><rect x="12.2" y="2.1" width="7.500" height="7.500" fill="#6e9acb"/><rect x="22.2" y="2.1" width="7.500" height="7.500" fill="#6e9acb"/><rect x="2.2" y="12.1" width="7.500" height="7.500" fill="#6e9acb"/><rect x="12.2" y="12.1" width="7.500" height="7.500" fill="#6e9acb"/><rect x="22.2" y="12.1" width="7.500" height="7.500" fill="#6e9acb"/><rect x="2.2" y="22.1" width="7.500" height="7.500" fill="#6e9acb"/><rect x="12.2" y="22.1" width="7.500" height="7.500" fill="#6e9acb"/><rect x="22.2" y="22.1" width="7.500" height="7.500" fill="#6e9acb"/></svg>
<span class="abs t" style="left:117.4px;top:474.0px;height:36px;line-height:36px;font-size:27px;font-weight:400;color:#1e1e1e;letter-spacing:0.278px;">Mapzen Global Terrain</span>
<svg class="abs" style="left:74px;top:512.0px" width="32" height="32" viewBox="0 0 32 32" ><rect x="2.2" y="2.1" width="7.500" height="7.500" fill="#6e9acb"/><rect x="12.2" y="2.1" width="7.500" height="7.500" fill="#6e9acb"/><rect x="22.2" y="2.1" width="7.500" height="7.500" fill="#6e9acb"/><rect x="2.2" y="12.1" width="7.500" height="7.500" fill="#6e9acb"/><rect x="12.2" y="12.1" width="7.500" height="7.500" fill="#6e9acb"/><rect x="22.2" y="12.1" width="7.500" height="7.500" fill="#6e9acb"/><rect x="2.2" y="22.1" width="7.500" height="7.500" fill="#6e9acb"/><rect x="12.2" y="22.1" width="7.500" height="7.500" fill="#6e9acb"/><rect x="22.2" y="22.1" width="7.500" height="7.500" fill="#6e9acb"/></svg>
<span class="abs t" style="left:117.4px;top:510.0px;height:36px;line-height:36px;font-size:27px;font-weight:400;color:#1e1e1e;letter-spacing:0.269px;">OpenStreetMap</span>
<svg class="abs" style="left:42px;top:548.0px" width="32" height="32" viewBox="0 0 32 32" ><clipPath id="wc"><ellipse cx="16" cy="15.900" rx="15" ry="13"/></clipPath><ellipse cx="16" cy="15.900" rx="15" ry="13" fill="#8fb3dc"/><g clip-path="url(#wc)"><rect x="0" y="2" width="32" height="4.500" fill="#2b5181"/><rect x="0" y="7.500" width="32" height="3" fill="#7fa7d6"/><rect x="0" y="11.300" width="32" height="3.700" fill="#2b5181"/><rect x="0" y="15.800" width="32" height="1.200" fill="#c9dcf0"/><rect x="0" y="17.800" width="32" height="3.700" fill="#2b5181"/><rect x="0" y="22.300" width="32" height="3" fill="#7fa7d6"/><rect x="0" y="26" width="32" height="4.500" fill="#2b5181"/><path d="M0 7h32M0 10.900h32M0 15.400h32M0 17.400h32M0 21.900h32M0 25.600h32" stroke="#fff" stroke-width=".800"/><ellipse cx="16" cy="15.900" rx="5.600" ry="13" fill="#5d8cc4" fill-opacity=".55" stroke="#fff" stroke-width="1.100"/></g><ellipse cx="16" cy="15.900" rx="15" ry="13" fill="none" stroke="#1c2f4a" stroke-width="2"/></svg>
<span class="abs t" style="left:86.1px;top:546.0px;height:36px;line-height:36px;font-size:27px;font-weight:400;color:#1e1e1e;letter-spacing:-1.167px;">WCS</span>
<svg class="abs" style="left:42px;top:584.0px" width="32" height="32" viewBox="0 0 32 32" ><ellipse cx="16" cy="16.200" rx="15" ry="13.200" fill="#fff" stroke="#5b8cc5" stroke-width="1.300"/><ellipse cx="16" cy="16.200" rx="6.500" ry="13.200" fill="none" stroke="#7aa6dc" stroke-width="1"/><path d="M1.500 15.600h29" stroke="#b7d1ee" stroke-width="2.200" fill="none"/><path d="M3.500 9h25M3.500 22.400h25" stroke="#7aa6dc" stroke-width="1" fill="none"/><path d="M7.100 8.900l5.700 15.100l6.700-14.900h5.700" fill="none" stroke="#222" stroke-width="1.200"/><circle cx="7.100" cy="8.900" r="1.800" fill="#fff" stroke="#222" stroke-width="1.100"/><circle cx="12.800" cy="24" r="1.800" fill="#fff" stroke="#222" stroke-width="1.100"/><circle cx="19.500" cy="9.100" r="1.800" fill="#fff" stroke="#222" stroke-width="1.100"/><circle cx="25.200" cy="9.100" r="1.800" fill="#fff" stroke="#222" stroke-width="1.100"/></svg>
<span class="abs t" style="left:86.1px;top:582.0px;height:36px;line-height:36px;font-size:27px;font-weight:400;color:#1e1e1e;letter-spacing:-0.457px;">WFS / OGC API - Features</span>
<svg class="abs" style="left:42px;top:620.0px" width="32" height="32" viewBox="0 0 32 32" ><ellipse cx="16" cy="16" rx="15" ry="13.200" fill="#fff" stroke="#5b8cc5" stroke-width="1.300"/><ellipse cx="16" cy="16" rx="6.500" ry="13.200" fill="none" stroke="#7aa6dc" stroke-width="1"/><path d="M1.500 15.400h29" stroke="#b7d1ee" stroke-width="2.200" fill="none"/><path d="M3.500 8.800h25M3.500 22.200h25" stroke="#7aa6dc" stroke-width="1" fill="none"/><path d="M7.100 9.300l2.500 6M19.500 9.300l-4.500 9M19.500 9.300h5.700" fill="none" stroke="#222" stroke-width="1.200"/><circle cx="7.100" cy="9.300" r="1.800" fill="#fff" stroke="#222" stroke-width="1.100"/><circle cx="19.500" cy="9.300" r="1.800" fill="#fff" stroke="#222" stroke-width="1.100"/><circle cx="25.200" cy="9.300" r="1.800" fill="#fff" stroke="#222" stroke-width="1.100"/><circle cx="9" cy="22.700" r="7.700" fill="#fff" stroke="#27384f" stroke-width="1"/><path d="M4 19.500c1.500-1.500 3.500-1.500 4.500-.500c.500 1.500-1 2-1.500 3.500c-.500 1.500.500 3 0 4.500c-2-1-3.500-4.500-3-7.500zM10 17c2-1 5 0 6 2.500c.800 2.500 0 5.500-2 7.500c-1.500.500-2.500-.500-2.500-2c0-1.500-1.500-2.500-1.500-4c0-1.500-.500-2.500 0-4zM8.500 26c.800-.300 1.500.300 1.500 1.500c-.300.800-1 1-1.500 .500z" fill="#27384f"/></svg>
<span class="abs t" style="left:86.1px;top:618.0px;height:36px;line-height:36px;font-size:27px;font-weight:400;color:#1e1e1e;letter-spacing:-0.740px;">ArcGIS REST Servers</span>
<svg class="abs" style="left:42px;top:656.0px" width="32" height="32" viewBox="0 0 32 32" ><rect x="13.100" y=".600" width="5.800" height="11.200" rx="2.900" fill="#6e9acb" stroke="#3d6ea8" stroke-width="1" transform="rotate(0 16 16)"/><rect x="13.100" y=".600" width="5.800" height="11.200" rx="2.900" fill="#6e9acb" stroke="#3d6ea8" stroke-width="1" transform="rotate(60 16 16)"/><rect x="13.100" y=".600" width="5.800" height="11.200" rx="2.900" fill="#6e9acb" stroke="#3d6ea8" stroke-width="1" transform="rotate(120 16 16)"/><rect x="13.100" y=".600" width="5.800" height="11.200" rx="2.900" fill="#6e9acb" stroke="#3d6ea8" stroke-width="1" transform="rotate(180 16 16)"/><rect x="13.100" y=".600" width="5.800" height="11.200" rx="2.900" fill="#6e9acb" stroke="#3d6ea8" stroke-width="1" transform="rotate(240 16 16)"/><rect x="13.100" y=".600" width="5.800" height="11.200" rx="2.900" fill="#6e9acb" stroke="#3d6ea8" stroke-width="1" transform="rotate(300 16 16)"/><circle cx="16" cy="16" r="3.200" fill="#6e9acb" stroke="#3d6ea8" stroke-width="1"/></svg>
<span class="abs t" style="left:86.1px;top:654.0px;height:36px;line-height:36px;font-size:27px;font-weight:400;color:#1e1e1e;letter-spacing:-0.228px;">GeoNode</span>
<div class="abs" style="left:405px;top:711px;width:34px;height:2px;background:repeating-linear-gradient(90deg,#bdbdbd 0 2px,transparent 2px 6px)"></div>
<div class="abs" style="left:844px;top:694px;width:2px;height:34px;background:repeating-linear-gradient(180deg,#bdbdbd 0 2px,transparent 2px 6px)"></div>
<span class="abs t" style="left:9.0px;top:724.5px;height:30px;line-height:30px;font-size:22.5px;font-weight:400;color:#1e1e1e;letter-spacing:0.326px;">Layers</span>
<svg class="abs" style="left:783px;top:727px" width="52" height="24" viewBox="0 0 52 24">
<rect x="1" y="1" width="21" height="21" rx="3" fill="none" stroke="#6f6f6f" stroke-width="1.600"/><rect x="9" y="6" width="9" height="7" rx="1" fill="none" stroke="#6f6f6f" stroke-width="1.600"/><rect x="5" y="10" width="9" height="7" rx="1" fill="#ececec" stroke="#6f6f6f" stroke-width="1.600"/>
<rect x="29" y="1" width="21" height="21" rx="3" fill="none" stroke="#6f6f6f" stroke-width="1.600"/><path d="M33.500 6l12 11M45.500 6l-12 11" stroke="#5f5f5f" stroke-width="3.200"/></svg>
<svg class="abs" style="left:17px;top:772px" width="34" height="32" viewBox="0 0 34 32">
<path d="M2 14l9-6l6 5l-8 7z" fill="#e23b3b"/><path d="M4 10l8-5l5 4l-8 5z" fill="#f3d21b"/><path d="M8 20l9-7l4 4l-9 6z" fill="#3f7fd0"/>
<path d="M31 4l-13 13" stroke="#c98a3c" stroke-width="3.500" stroke-linecap="round"/><path d="M12 17l7-5l5 6l-6 6c-3 2-6 1-8-1z" fill="#d9a55a" stroke="#8a5a1f" stroke-width="1"/><path d="M11 21l5 5M14 19l5 5" stroke="#8a5a1f" stroke-width=".800"/></svg>
<svg class="abs" style="left:68px;top:771px" width="34" height="34" viewBox="0 0 34 34">
<rect x="3" y="12" width="14" height="16" fill="#e6e6e3" stroke="#8d8d89" stroke-width="1.400"/><rect x="9" y="7" width="14" height="18" fill="#efefec" stroke="#8d8d89" stroke-width="1.400"/><path d="M14 9v-4c0-4 6-4 6 0v12" fill="none" stroke="#3d6591" stroke-width="2"/>
<rect x="18" y="20" width="12" height="12" rx="2.500" fill="#4fa84f" stroke="#2f7d2f" stroke-width="1"/><path d="M24 22.500v7M20.500 26h7" stroke="#fff" stroke-width="2.200"/></svg>
<svg class="abs" style="left:116px;top:772px" width="40" height="34" viewBox="0 0 40 34">
<path d="M2 16c6-9 22-9 30 0c-8 8-24 8-30 0z" fill="#fff" stroke="#7d7d7d" stroke-width="1.600"/><path d="M1.500 12c7-9 24-9 31 0" fill="none" stroke="#8f8f8f" stroke-width="1.600"/><circle cx="17" cy="16" r="6" fill="#6d9bcf" stroke="#2f557f" stroke-width="1.200"/><circle cx="17" cy="16" r="2.500" fill="#1b2a3d"/><circle cx="15" cy="14" r="1.200" fill="#fff"/>
<path d="M28 26h9l-4.500 5z" fill="#555"/></svg>
<svg class="abs" style="left:168px;top:771px" width="40" height="36" viewBox="0 0 40 36">
<path d="M2 5h28l-11 13v13l-6-3v-10z" fill="#7aa6dc" stroke="#3d6591" stroke-width="1.400" stroke-linejoin="round"/><rect x="2" y="2" width="28" height="5" fill="#f5e04a" stroke="#a08c1a" stroke-width="1"/>
<path d="M28 27h9l-4.500 5z" fill="#555"/></svg>
<svg class="abs" style="left:218px;top:770px" width="62" height="36" viewBox="0 0 62 36">
<text x="2" y="23" font-family="Liberation Serif, serif" font-size="40" fill="#5b2d82" stroke="#5b2d82" stroke-width=".600">ε</text>
<path d="M17.500 19.500h14.500v4l-3 3.500v6.500h-2.500v-7.500h-3.500v7.500h-2.500v-6.500l-3-3.500z" fill="#9a9d98" stroke="#d4d6d2" stroke-width="1.200"/>
<path d="M44 15.500h16l-8 8.500z" fill="#555"/></svg>
<svg class="abs" style="left:290px;top:770px" width="38" height="36" viewBox="0 0 38 36">
<path d="M3.800 7h27.400M7.300 7v22M7.300 14h5M7.300 26h5" stroke="#8a8a8a" stroke-width="1.400" fill="none"/><rect x="11.800" y="11" width="6.900" height="6.800" fill="#f7931e"/><rect x="14" y="13.200" width="2.500" height="2.500" fill="#ffe0b0"/><rect x="11.800" y="23" width="6.900" height="7" fill="#f7931e"/><rect x="14" y="25.300" width="2.500" height="2.500" fill="#ffe0b0"/>
<path d="M21 5h6v14.600h7l-10 11.400l-10-11.400h7z" fill="#5b8fce" stroke="#2f557f" stroke-width="1.500" stroke-linejoin="round"/></svg>
<svg class="abs" style="left:340px;top:770px" width="38" height="36" viewBox="0 0 38 36">
<path d="M3.800 7h27.400M7.400 7v22M7.400 14.500h5M7.400 26.500h5" stroke="#8a8a8a" stroke-width="1.400" fill="none"/><rect x="12" y="11.600" width="6.900" height="6.800" fill="#f7931e"/><rect x="14.200" y="13.800" width="2.500" height="2.500" fill="#ffe0b0"/><rect x="12" y="23.700" width="6.900" height="7" fill="#f7931e"/><rect x="14.200" y="26" width="2.500" height="2.500" fill="#ffe0b0"/>
<path d="M21.500 29.200h6v-16.400h6.500l-9.500-9.600l-9.100 9.600h6.100z" fill="#5b8fce" stroke="#2f557f" stroke-width="1.500" stroke-linejoin="round"/></svg>
<svg class="abs" style="left:392px;top:772px" width="34" height="34" viewBox="0 0 34 34">
<rect x="3.900" y="3.500" width="21.500" height="21" fill="#f1f1f1" stroke="#878787" stroke-width="1.500"/><rect x="18" y="20.600" width="12.200" height="9" rx="2.500" fill="#ec4a55"/><rect x="20.300" y="23.800" width="7.600" height="2.600" fill="#fff"/></svg>
<div class="abs" style="left:3px;top:822px;width:833px;height:572px;background:#fff;border-top:1px solid #c8c8c8;border-right:1px solid #c4c4c4"></div>
<div class="abs" style="left:3px;top:823px;width:833px;height:35px;background:#dcdcdc"></div>
<svg class="abs" style="left:16px;top:835px" width="16" height="10" viewBox="0 0 16 10"><path d="M1 1h14l-7 8z" fill="#595959"/></svg>
<svg class="abs" style="left:50.3px;top:826.4px" width="27.4" height="27.4" viewBox="0 0 27.4 27.4"><rect x=".9" y=".9" width="25.6" height="25.6" rx="1.5" fill="#fff" stroke="#b3b3b3" stroke-width="1.8"/><path d="M5.400 12.600l6.400 9.300l8.600-16.500" fill="none" stroke="#222" stroke-width="3.200" stroke-linejoin="miter"/></svg>
<svg class="abs" style="left:89px;top:826px" width="34" height="26" viewBox="0 0 34 26"><defs><linearGradient id="pg" x1="0" y1="0" x2="0" y2="1"><stop offset="0" stop-color="#f6f6f6"/><stop offset="1" stop-color="#d9d9d9"/></linearGradient></defs><path d="M2.500 6c1-4 6-5 11-3c3 1.300 5.500 2.200 8.500 1.500c3-.700 7-2 9 .500c2 3 1.500 8 1 11c-.500 2-2 2.500-4.500 2c-3-.700-6-1-9 .500c-4 2-8 5.500-12 5c-3-.500-3.500-4-3.800-8c-.300-4-.700-7-.200-9.500z" fill="url(#pg)" stroke="#8e8e86" stroke-width="1.800"/></svg>
<span class="abs t" style="left:134.0px;top:822.0px;height:36px;line-height:36px;font-size:27px;font-weight:700;color:#000;letter-spacing:0.387px;text-decoration:underline;text-decoration-thickness:2.500px;text-underline-offset:3px;">____Demo-P_recs__GeoPard</span>
<svg class="abs" style="left:90.2px;top:880.3px" width="27.4" height="27.4" viewBox="0 0 27.4 27.4"><rect x=".9" y=".9" width="25.6" height="25.6" rx="1.5" fill="#fff" stroke="#b3b3b3" stroke-width="1.8"/><path d="M5.400 12.600l6.400 9.300l8.600-16.500" fill="none" stroke="#222" stroke-width="3.200" stroke-linejoin="miter"/></svg>
<div class="abs" style="left:130px;top:860px;width:66px;height:66px;background:#d7191c;border:1px solid #a01214"></div>
<span class="abs t" style="left:209.5px;top:876.0px;height:36px;line-height:36px;font-size:27px;font-weight:400;color:#1e1e1e;letter-spacing:1.651px;">93,000</span>
<svg class="abs" style="left:90.2px;top:952.3px" width="27.4" height="27.4" viewBox="0 0 27.4 27.4"><rect x=".9" y=".9" width="25.6" height="25.6" rx="1.5" fill="#fff" stroke="#b3b3b3" stroke-width="1.8"/><path d="M5.400 12.600l6.400 9.300l8.600-16.500" fill="none" stroke="#222" stroke-width="3.200" stroke-linejoin="miter"/></svg>
<div class="abs" style="left:130px;top:932px;width:66px;height:66px;background:#fec980;border:1px solid #b08a52"></div>
<span class="abs t" style="left:209.5px;top:948.0px;height:36px;line-height:36px;font-size:27px;font-weight:400;color:#1e1e1e;letter-spacing:1.068px;">94,000</span>
<svg class="abs" style="left:90.2px;top:1024.3px" width="27.4" height="27.4" viewBox="0 0 27.4 27.4"><rect x=".9" y=".9" width="25.6" height="25.6" rx="1.5" fill="#fff" stroke="#b3b3b3" stroke-width="1.8"/><path d="M5.400 12.600l6.400 9.300l8.600-16.500" fill="none" stroke="#222" stroke-width="3.200" stroke-linejoin="miter"/></svg>
<div class="abs" style="left:130px;top:1004px;width:66px;height:66px;background:#c7e8ad;border:1px solid #8aa475"></div>
<span class="abs t" style="left:209.5px;top:1020.0px;height:36px;line-height:36px;font-size:27px;font-weight:400;color:#1e1e1e;letter-spacing:1.318px;">95,000</span>
<svg class="abs" style="left:90.2px;top:1096.3px" width="27.4" height="27.4" viewBox="0 0 27.4 27.4"><rect x=".9" y=".9" width="25.6" height="25.6" rx="1.5" fill="#fff" stroke="#b3b3b3" stroke-width="1.8"/><path d="M5.400 12.600l6.400 9.300l8.600-16.500" fill="none" stroke="#222" stroke-width="3.200" stroke-linejoin="miter"/></svg>
<div class="abs" style="left:130px;top:1076px;width:66px;height:66px;background:#2b83ba;border:1px solid #1f6391"></div>
<div class="abs" style="left:61px;top:864px;width:251px;height:189px;border:10px solid #e83e25"></div>
<svg class="abs" style="left:16px;top:1159px" width="16" height="10" viewBox="0 0 16 10"><path d="M1 1h14l-7 8z" fill="#595959"/></svg>
<svg class="abs" style="left:50.3px;top:1150.4px" width="27.4" height="27.4" viewBox="0 0 27.4 27.4"><rect x=".9" y=".9" width="25.6" height="25.6" rx="1.5" fill="#fff" stroke="#b3b3b3" stroke-width="1.8"/><path d="M5.400 12.600l6.400 9.300l8.600-16.500" fill="none" stroke="#222" stroke-width="3.200" stroke-linejoin="miter"/></svg>
<svg class="abs" style="left:94px;top:1151px" width="26" height="26" viewBox="0 0 28 28"><rect width="28" height="28" fill="#fff"/>
<rect x="0" y="0" width="9.300" height="9.300" fill="#2b3a50"/><rect x="9.300" y="0" width="9.300" height="9.300" fill="#dfe9f6"/><rect x="18.600" y="0" width="9.300" height="9.300" fill="#2b3a50"/>
<rect x="0" y="9.300" width="9.300" height="9.300" fill="#a9c4e4"/><rect x="9.300" y="9.300" width="9.300" height="9.300" fill="#2b3a50"/><rect x="18.600" y="9.300" width="9.300" height="9.300" fill="#b9d0ea"/>
<rect x="0" y="18.600" width="9.300" height="9.300" fill="#2b3a50"/><rect x="9.300" y="18.600" width="9.300" height="9.300" fill="#a9c4e4"/><rect x="18.600" y="18.600" width="9.300" height="9.300" fill="#fff"/></svg>
<span class="abs t" style="left:134.0px;top:1146.0px;height:36px;line-height:36px;font-size:27px;font-weight:700;color:#222;letter-spacing:-0.229px;">Google Maps</span>
<div class="abs" style="left:510px;top:14px;width:1031px;height:643px;border-radius:20px;background:#ececec;box-shadow:0 0 0 1px rgba(0,0,0,.17),0 26px 46px 0 rgba(0,0,0,.28),0 4px 40px 4px rgba(0,0,0,.10);overflow:hidden">
<div class="abs" style="left:0;top:0;width:100%;height:56px;background:#f3f2f1;border-bottom:1px solid #d2d2d2"></div>
<div class="abs" style="left:0;top:119px;width:100%;height:33px;background:#e9e9e9;border-top:1px solid #c6c6c6"></div>
<div class="abs" style="left:26px;top:153px;width:1004px;height:431px;background:#fff"></div>
<div class="abs" style="left:0;top:584px;width:100%;height:1px;background:#bfbfbf"></div>
</div>
<div class="abs" style="left:526px;top:30px;width:24px;height:24px;border-radius:50%;background:#ed6a5e;box-shadow:inset 0 0 0 1px #d5544a"></div>
<div class="abs" style="left:566px;top:30px;width:24px;height:24px;border-radius:50%;background:#f5bf4f;box-shadow:inset 0 0 0 1px #d8a136"></div>
<div class="abs" style="left:606px;top:30px;width:24px;height:24px;border-radius:50%;background:#61c554;box-shadow:inset 0 0 0 1px #4aa73c"></div>
<span class="abs t" style="left:718.5px;top:23.0px;height:36px;line-height:36px;font-size:27px;font-weight:700;color:#4b4b4b;letter-spacing:-0.322px;">Demo-P_recs__GeoPard — Features Total: 3, Filtered: 3, Selec...</span>
<svg class="abs" style="left:526.0px;top:83.0px" width="30" height="34" viewBox="0 0 30 34"><g transform="rotate(27 15 17)"><rect x="10.500" y="3" width="9" height="20" fill="#f0dc3a" stroke="#7a6d16" stroke-width="1"/><rect x="13.500" y="3" width="3" height="20" fill="#fbf08a"/><rect x="10.500" y="1" width="9" height="3.500" fill="#e9e9e9" stroke="#8a8a8a" stroke-width=".800"/><path d="M10.500 23l4.500 9l4.500-9z" fill="#e6e0d2" stroke="#555" stroke-width="1"/><path d="M13.200 28.500l1.800 3.500l1.800-3.500z" fill="#333"/></g></svg>
<svg class="abs" style="left:577.0px;top:84.0px" width="32" height="32" viewBox="0 0 32 32"><g opacity=".55"><rect x="2" y="4" width="26" height="7" fill="#dcdacb" stroke="#c2c0b2"/><rect x="2" y="13" width="26" height="7" fill="#dcdacb" stroke="#c2c0b2"/><rect x="2" y="22" width="26" height="7" fill="#dcdacb" stroke="#c2c0b2"/><g transform="rotate(27 20 15)"><rect x="17" y="0" width="7" height="22" fill="#d9d7d3" stroke="#b5b3ae"/><path d="M17 22l3.500 7l3.500-7z" fill="#eee" stroke="#b5b3ae"/></g></g></svg>
<svg class="abs" style="left:626.0px;top:84.0px" width="32" height="32" viewBox="0 0 32 32"><g opacity=".55"><rect x="1.500" y="1.500" width="27" height="27" rx="3" fill="#cfd0d6" stroke="#b9b9b0" stroke-width="1.500"/><rect x="6" y="3" width="18" height="10" fill="#eeeeee" stroke="#bbb" stroke-width=".800"/><path d="M8 6h14M8 9h14" stroke="#c6c6c6" stroke-width="1.200"/><rect x="7" y="19" width="13" height="9" fill="#e4e4e4" stroke="#bbb" stroke-width=".800"/><rect x="9" y="21" width="3.500" height="5" fill="#b5b5b5"/><g transform="rotate(27 24 20)"><rect x="21" y="9" width="6" height="15" fill="#d2cfca" stroke="#b5b3ae"/><path d="M21 24l3 6l3-6z" fill="#eee" stroke="#b5b3ae"/></g></g></svg>
<svg class="abs" style="left:676.0px;top:83.5px" width="32" height="33" viewBox="0 0 32 33"><defs><linearGradient id="rlg" x1="0" y1="0" x2="0" y2="1"><stop offset="0" stop-color="#5a9be6"/><stop offset="1" stop-color="#2f6fc2"/></linearGradient></defs><path d="M2.500 15.500C3 8 9.500 2.500 17 2.500C21 2.500 24.500 4.300 26.500 6.800L30 3V15H18.500L22 11.400C20.500 10 19 9.300 17 9.300C13 9.300 9.300 11.500 8.200 15.500Z" fill="url(#rlg)" stroke="#2b64b0" stroke-width=".900"/><path d="M2.500 15.500C3 8 9.500 2.500 17 2.500C21 2.500 24.500 4.300 26.500 6.800L30 3V15H18.500L22 11.400C20.500 10 19 9.300 17 9.300C13 9.300 9.300 11.500 8.200 15.500Z" fill="url(#rlg)" stroke="#2b64b0" stroke-width=".900" transform="rotate(180 16 16.700)"/><path d="M5 13c2-5 7-8 13-7.500" stroke="#a9cdf5" stroke-width="1.500" fill="none"/></svg>
<div class="abs" style="left:723.5px;top:89px;width:1px;height:22px;background:#d4d4d4"></div><div class="abs" style="left:724.5px;top:89px;width:2px;height:22px;background:#fbfbfb"></div>
<svg class="abs" style="left:739.0px;top:84.0px" width="34" height="32" viewBox="0 0 34 32"><g opacity=".5"><rect x="4" y="2" width="24" height="26" fill="#e9e9e6" stroke="#c2c2bc"/><path d="M6 6h8M17 6h9M6 17h8M17 17h9M6 22h8M17 22h9" stroke="#c6c6c0" stroke-width="2"/><rect x="1" y="9" width="30" height="5" fill="#d6d2c0" stroke="#bdb9a6"/><rect x="18" y="20" width="13" height="12" rx="3" fill="#cfcfcf" stroke="#b6b6b6"/><path d="M24.500 22.500v7M21 26h7M22 23.500l5 5M27 23.500l-5 5" stroke="#fff" stroke-width="1.400"/></g></svg>
<svg class="abs" style="left:790.0px;top:84.0px" width="30" height="32" viewBox="0 0 30 32"><g opacity=".45"><rect x="3" y="3" width="24" height="4" fill="#c9a6a0" stroke="#b08c86"/><rect x="11" y="0" width="8" height="3" fill="#c9a6a0"/><path d="M5 9h20l-2 21h-16z" fill="#d9b9b3" stroke="#b08c86"/><path d="M10 12v15M15 12v15M20 12v15" stroke="#b08c86" stroke-width="1.600"/></g></svg>
<svg class="abs" style="left:839.0px;top:84.0px" width="34" height="32" viewBox="0 0 34 32"><g opacity=".5" fill="none" stroke="#b9b3b3" stroke-width="1.800"><path d="M2 6l22 12M2 20l22-10"/><ellipse cx="27" cy="9" rx="4.500" ry="3.500" stroke="#d1a9a9"/><ellipse cx="26" cy="22" rx="4" ry="4.500" stroke="#d1a9a9"/></g></svg>
<svg class="abs" style="left:891.0px;top:84.0px" width="30" height="32" viewBox="0 0 30 32"><g opacity=".5"><path d="M10 2h11l6 6v16h-17z" fill="#f1f1f1" stroke="#bdbdbd"/><path d="M3 9h11l6 6v16h-17z" fill="#f6f6f6" stroke="#bdbdbd"/><path d="M6 18h10M6 22h10M6 26h10" stroke="#cfcfcf" stroke-width="1.400"/></g></svg>
<svg class="abs" style="left:940.0px;top:84.0px" width="30" height="32" viewBox="0 0 30 32"><g opacity=".5"><rect x="3" y="3" width="24" height="28" rx="2" fill="#e1e1df" stroke="#b9b9b5"/><rect x="9" y="0.500" width="12" height="6" rx="1.500" fill="#d2d2cf" stroke="#b1b1ad"/><rect x="7" y="9" width="16" height="19" fill="#f6f6f6" stroke="#c2c2c2"/><path d="M10 14h10M10 18h10M10 22h10" stroke="#cfcfcf" stroke-width="1.400"/></g></svg>
<div class="abs" style="left:987.5px;top:89px;width:1px;height:22px;background:#d4d4d4"></div><div class="abs" style="left:988.5px;top:89px;width:2px;height:22px;background:#fbfbfb"></div>
<svg class="abs" style="left:1004.0px;top:84.0px" width="32" height="32" viewBox="0 0 32 32"><rect x="11" y="12" width="18" height="18" fill="#fbe94e" stroke="#c9b21e" stroke-width="1.200"/><text x="0" y="21.500" font-family="Liberation Serif, serif" font-size="42" fill="#5b2d82" stroke="#5b2d82" stroke-width=".500">ε</text></svg>
<svg class="abs" style="left:1055.0px;top:86.0px" width="30" height="28" viewBox="0 0 30 28"><rect x="1.500" y="1.500" width="27" height="6.500" fill="#fbe94e" stroke="#c9b21e" stroke-width="1.300"/><rect x="1.500" y="10.700" width="27" height="6.500" fill="#fbe94e" stroke="#c9b21e" stroke-width="1.300"/><rect x="1.500" y="20" width="27" height="6.500" fill="#fbe94e" stroke="#c9b21e" stroke-width="1.300"/></svg>
<svg class="abs" style="left:1105.0px;top:86.0px" width="30" height="28" viewBox="0 0 30 28"><path d="M2 1.500h26.500v25z" fill="#f2f2f2" stroke="#8d8d8d" stroke-width="1.300"/><path d="M2 1.500v25h26.500z" fill="#fbe94e" stroke="#c9b21e" stroke-width="1.300"/></svg>
<svg class="abs" style="left:1155.0px;top:84.0px" width="32" height="32" viewBox="0 0 32 32"><rect x="2" y="2.500" width="18" height="18" fill="#fbe94e" stroke="#c9b21e" stroke-width="1.300"/><rect x="17" y="17" width="14" height="14" rx="2.500" fill="#d9202a" stroke="#a3141c"/><circle cx="24" cy="24" r="4.200" fill="none" stroke="#fff" stroke-width="1.500"/><path d="M21 27l6-6" stroke="#fff" stroke-width="1.500"/></svg>
<svg class="abs" style="left:1205.0px;top:84.0px" width="30" height="32" viewBox="0 0 30 32"><path d="M2 4h26l-10 12v13l-6-3v-10z" fill="#7aa6dc" stroke="#3d6591" stroke-width="1.400" stroke-linejoin="round"/><rect x="2" y="1.500" width="26" height="4.500" fill="#fbe94e" stroke="#b39b14" stroke-width="1"/></svg>
<svg class="abs" style="left:1255.0px;top:85.0px" width="30" height="30" viewBox="0 0 30 30"><rect x="1.500" y="1.500" width="27" height="27" fill="#d6e6f7" stroke="#5b8fce" stroke-width="1.400"/><path d="M4 6h8M18 6h8M4 11h6M20 11h6M4 16h6M20 16h6" stroke="#8db4e2" stroke-width="1.600"/><rect x="3" y="21" width="24" height="5.500" fill="#fbe94e" stroke="#c9b21e"/><path d="M6 23.700h18" stroke="#5b8fce" stroke-width="1.400"/><path d="M12.500 20v-9h-4l6.500-8l6.500 8h-4v9z" fill="#5b8fce" stroke="#2f557f" stroke-width="1"/></svg>
<svg class="abs" style="left:1304.0px;top:84.0px" width="32" height="32" viewBox="0 0 32 32"><rect x="6" y="5" width="18" height="18" fill="#fbe94e" stroke="#c9b21e" stroke-width="1.200"/><path d="M16 1l5 6h-3v6h6v-3l6 5.500l-6 5.500v-3h-6v6h3l-5 6l-5-6h3v-6h-6v3l-6-5.500l6-5.500v3h6v-6h-3z" fill="#5b8fce" stroke="#2f557f" stroke-width="1" stroke-linejoin="round"/></svg>
<svg class="abs" style="left:1353.0px;top:83.0px" width="34" height="34" viewBox="0 0 34 34"><rect x="5" y="5" width="17" height="17" fill="#fbe94e" stroke="#c9b21e" stroke-width="1.200"/><path d="M3 32l10-10" stroke="#222" stroke-width="4.500" stroke-linecap="round"/><path d="M3.500 31.500l8-8" stroke="#f0b429" stroke-width="2.200" stroke-linecap="round"/><circle cx="21" cy="12.500" r="10" fill="#f4f4f2" fill-opacity=".85" stroke="#6f6f6f" stroke-width="1.400"/><path d="M21 3.500a9 9 0 0 0 0 18z" fill="#fbe94e" fill-opacity=".35"/></svg>
<div class="abs" style="left:1401.5px;top:89px;width:1px;height:22px;background:#d4d4d4"></div><div class="abs" style="left:1402.5px;top:89px;width:2px;height:22px;background:#fbfbfb"></div>
<svg class="abs" style="left:1418.0px;top:83.0px" width="34" height="34" viewBox="0 0 34 34"><g opacity=".75"><rect x="2" y="3" width="26" height="24" fill="#e9e9e6" stroke="#c6c6c0"/><rect x="7" y="1" width="7" height="28" fill="#d3cfc4" stroke="#bdb9ae"/><path d="M4 9h22M4 15h22M4 21h22" stroke="#d0d0ca" stroke-width="1.500"/><rect x="18" y="19" width="14" height="13" rx="3" fill="#cfcfcf" stroke="#b6b6b6"/><path d="M25 21.500v8M21 25.500h8M22.200 22.700l5.600 5.600M27.800 22.700l-5.600 5.600" stroke="#fff" stroke-width="1.400"/></g></svg>
<svg class="abs" style="left:1468.0px;top:83.0px" width="34" height="34" viewBox="0 0 34 34"><g opacity=".7"><rect x="2" y="3" width="26" height="24" fill="#ece6e4" stroke="#ccbfbc"/><rect x="7" y="1" width="7" height="28" fill="#d9c3bf" stroke="#c4aaa6"/><path d="M4 9h22M4 15h22M4 21h22" stroke="#d9cfcc" stroke-width="1.500"/><rect x="18" y="19" width="14" height="13" rx="3" fill="#d4c4c4" stroke="#bba9a9"/><path d="M21.500 22l7 7M28.500 22l-7 7" stroke="#fff" stroke-width="2"/></g></svg>
<svg class="abs" style="left:1516.0px;top:92.0px" width="18" height="18" viewBox="0 0 18 18"><path d="M2 3l6 6l-6 6M10 3l6 6l-6 6" fill="none" stroke="#3a3a3a" stroke-width="2"/></svg>
<div class="abs" style="left:511px;top:134px;width:223px;height:31px;background:linear-gradient(#f7f7f7,#f1f1f1 45%,#e7e7e7);border-right:1px solid #c3c3c3;border-bottom:2px solid #a9a9a9"></div>
<span class="abs t" style="left:624.0px;top:137.0px;height:30px;line-height:30px;font-size:22.5px;font-weight:400;color:#111;letter-spacing:2.117px;">Id</span>
<div class="abs" style="left:735px;top:134px;width:199px;height:31px;background:linear-gradient(#f7f7f7,#f1f1f1 45%,#e7e7e7);border-right:1px solid #c3c3c3;border-bottom:2px solid #a9a9a9"></div>
<span class="abs t" style="left:805.5px;top:137.0px;height:30px;line-height:30px;font-size:22.5px;font-weight:400;color:#111;letter-spacing:0.922px;">Value</span>
<div class="abs" style="left:935px;top:134px;width:199px;height:31px;background:linear-gradient(#f7f7f7,#f1f1f1 45%,#e7e7e7);border-right:1px solid #c3c3c3;border-bottom:2px solid #a9a9a9"></div>
<span class="abs t" style="left:987.5px;top:137.0px;height:30px;line-height:30px;font-size:22.5px;font-weight:400;color:#111;letter-spacing:0.744px;">Hectares</span>
<div class="abs" style="left:511px;top:134px;width:24px;height:31px;background:linear-gradient(#f7f7f7,#f1f1f1 45%,#e7e7e7);border-bottom:2px solid #a9a9a9"></div>
<div class="abs" style="left:536px;top:167px;width:598px;height:59px;background:#fff;border-bottom:1px solid #d0d0d0;border-right:1px solid #d0d0d0"></div>
<div class="abs" style="left:734px;top:167px;width:1px;height:59px;background:#d0d0d0"></div>
<div class="abs" style="left:934px;top:167px;width:1px;height:59px;background:#d0d0d0"></div>
<div class="abs" style="left:511px;top:167px;width:23px;height:58px;background:linear-gradient(#f6f6f6,#e9e9e9);border-right:2px solid #b4b4b4;border-bottom:2px solid #b4b4b4"></div>
<span class="abs t" style="left:515.5px;top:183.0px;height:30px;line-height:30px;font-size:22.5px;font-weight:400;color:#111;letter-spacing:1.484px;">1</span>
<span class="abs t" style="left:713.3px;top:178.0px;height:36px;line-height:36px;font-size:27px;font-weight:400;color:#1e1e1e;letter-spacing:1.869px;">1</span>
<span class="abs t" style="left:835.2px;top:178.0px;height:36px;line-height:36px;font-size:27px;font-weight:400;color:#1e1e1e;letter-spacing:1.651px;">93,000</span>
<span class="abs t" style="left:1034.9px;top:178.0px;height:36px;line-height:36px;font-size:27px;font-weight:400;color:#1e1e1e;letter-spacing:-0.401px;">1,61671</span>
<div class="abs" style="left:536px;top:227px;width:598px;height:59px;background:#f4f5f5;border-bottom:1px solid #d0d0d0;border-right:1px solid #d0d0d0"></div>
<div class="abs" style="left:734px;top:227px;width:1px;height:59px;background:#d0d0d0"></div>
<div class="abs" style="left:934px;top:227px;width:1px;height:59px;background:#d0d0d0"></div>
<div class="abs" style="left:511px;top:227px;width:23px;height:58px;background:linear-gradient(#f6f6f6,#e9e9e9);border-right:2px solid #b4b4b4;border-bottom:2px solid #b4b4b4"></div>
<span class="abs t" style="left:516.5px;top:243.0px;height:30px;line-height:30px;font-size:22.5px;font-weight:400;color:#111;letter-spacing:0.484px;">2</span>
<span class="abs t" style="left:711.7px;top:238.0px;height:36px;line-height:36px;font-size:27px;font-weight:400;color:#1e1e1e;letter-spacing:1.769px;">2</span>
<span class="abs t" style="left:839.7px;top:238.0px;height:36px;line-height:36px;font-size:27px;font-weight:400;color:#1e1e1e;letter-spacing:0.901px;">94,000</span>
<span class="abs t" style="left:1025.7px;top:238.0px;height:36px;line-height:36px;font-size:27px;font-weight:400;color:#1e1e1e;letter-spacing:0.784px;">5,63128</span>
<div class="abs" style="left:536px;top:287px;width:598px;height:59px;background:#fff;border-bottom:1px solid #d0d0d0;border-right:1px solid #d0d0d0"></div>
<div class="abs" style="left:734px;top:287px;width:1px;height:59px;background:#d0d0d0"></div>
<div class="abs" style="left:934px;top:287px;width:1px;height:59px;background:#d0d0d0"></div>
<div class="abs" style="left:511px;top:287px;width:23px;height:58px;background:linear-gradient(#f6f6f6,#e9e9e9);border-right:2px solid #b4b4b4;border-bottom:2px solid #b4b4b4"></div>
<span class="abs t" style="left:516.5px;top:303.0px;height:30px;line-height:30px;font-size:22.5px;font-weight:400;color:#111;letter-spacing:0.484px;">3</span>
<span class="abs t" style="left:711.7px;top:298.0px;height:36px;line-height:36px;font-size:27px;font-weight:400;color:#1e1e1e;letter-spacing:1.769px;">3</span>
<span class="abs t" style="left:838.0px;top:298.0px;height:36px;line-height:36px;font-size:27px;font-weight:400;color:#1e1e1e;letter-spacing:1.184px;">95,000</span>
<span class="abs t" style="left:1022.7px;top:298.0px;height:36px;line-height:36px;font-size:27px;font-weight:400;color:#1e1e1e;letter-spacing:1.213px;">0,95465</span>
<div class="abs" style="left:744px;top:111px;width:177px;height:240px;border:10px solid #e83e25"></div>
<div class="abs" style="left:517px;top:606px;width:237px;height:44px;border-radius:5px;background:linear-gradient(#fbfbfb,#ededed);border:1px solid #b7b7b7;box-shadow:0 1px 0 #d9d9d9;box-sizing:border-box"></div>
<svg class="abs" style="left:524.0px;top:614.0px" width="28" height="28" viewBox="0 0 28 28"><rect x="1" y="1" width="26" height="26" fill="#f4f8fd" stroke="#7aa6dc" stroke-width="1.400"/><rect x="1.700" y="1.700" width="24.600" height="6.300" fill="#b9d3ef"/><path d="M1 8.500h26" stroke="#7aa6dc" stroke-width="1.200"/><path d="M5 5h5M13 5h10" stroke="#5b8fce" stroke-width="2.400"/><path d="M5 12h5M13 12h10M5 16h5M13 16h10M5 20h5M13 20h10M5 24h5M13 24h10" stroke="#6d9bd6" stroke-width="1.300"/></svg>
<span class="abs t" style="left:557.8px;top:615.0px;height:30px;line-height:30px;font-size:21px;font-weight:400;color:#111;letter-spacing:0.126px;">Show All Features</span>
<svg class="abs" style="left:740px;top:638px" width="12" height="8" viewBox="0 0 12 8"><path d="M0 0h11l-5.500 7z" fill="#555"/></svg>
<svg class="abs" style="left:1450.0px;top:614.0px" width="28" height="28" viewBox="0 0 28 28"><rect x="1" y="1" width="26" height="26" fill="#eef4fb" stroke="#7aa6dc" stroke-width="1.400"/><rect x="4.500" y="7" width="5" height="3" fill="#2d4666"/><rect x="4.500" y="17.500" width="5" height="3" fill="#2d4666"/><rect x="12" y="5" width="11" height="7" rx="1.500" fill="#fff" stroke="#8db4e2" stroke-width="1.400"/><rect x="12" y="15.500" width="11" height="7" rx="1.500" fill="#fff" stroke="#8db4e2" stroke-width="1.400"/></svg>
<div class="abs" style="left:1488px;top:606px;width:48px;height:45px;border-radius:6px;background:#dcdcdc;border:2px solid #b4b4b4;box-sizing:border-box"></div>
<svg class="abs" style="left:1498.0px;top:614.0px" width="28" height="28" viewBox="0 0 28 28"><rect x="1" y="1" width="26" height="26" fill="#f4f8fd" stroke="#7aa6dc" stroke-width="1.400"/><rect x="1.700" y="1.700" width="24.600" height="6.300" fill="#b9d3ef"/><path d="M1 8.500h26" stroke="#7aa6dc" stroke-width="1.200"/><path d="M5 5h5M13 5h10" stroke="#5b8fce" stroke-width="2.400"/><path d="M5 12h5M13 12h10M5 16h5M13 16h10M5 20h5M13 20h10M5 24h5M13 24h10" stroke="#6d9bd6" stroke-width="1.300"/></svg>
</body></html>
